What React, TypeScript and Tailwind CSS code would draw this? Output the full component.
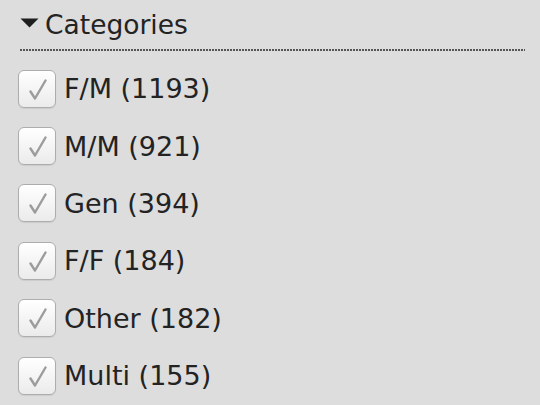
const categories = [
  { name: "F/M", count: 1193 },
  { name: "M/M", count: 921 },
  { name: "Gen", count: 394 },
  { name: "F/F", count: 184 },
  { name: "Other", count: 182 },
  { name: "Multi", count: 155 },
];

function CheckBox() {
  return (
    <div className="flex h-[38px] w-[38px] shrink-0 items-center justify-center rounded-[6px] border-[1.5px] border-[#adadad] bg-gradient-to-b from-[#ffffff] to-[#ebebeb] shadow-[0_1px_1px_rgba(0,0,0,0.08)]">
      <svg width="18" height="21" viewBox="0 0 18 21" className="ml-[1px] mt-[1px]">
        <path
          d="M1.5 12.5 L6 19.5 L16.5 1.5"
          fill="none"
          stroke="#9c9c9c"
          strokeWidth="2.4"
          strokeLinecap="round"
          strokeLinejoin="round"
        />
      </svg>
    </div>
  );
}

export default function App() {
  return (
    <div className="h-[405px] w-[540px] overflow-hidden bg-[#dddddd] font-['DejaVu_Sans',sans-serif] text-[#232323]">
      {/* header */}
      <div className="flex h-[49px] items-start pl-[20px] pt-[7px]">
        <svg width="19" height="10" viewBox="0 0 19 10" className="mt-[11px]">
          <path d="M0.5 0.5 L18.5 0.5 L9.5 9.5 Z" fill="#1e1e1e" />
        </svg>
        <span className="ml-[6px] text-[26.5px] leading-[36px]">Categories</span>
      </div>
      <div className="ml-[20px] h-[2px] w-[505px] bg-[repeating-linear-gradient(to_right,#555555_0px,#555555_2px,transparent_2px,transparent_3px)]" />

      {/* list */}
      <div className="mt-[9px] flex flex-col">
        {categories.map((c) => (
          <div key={c.name} className="flex h-[57.4px] items-center pl-[18px]">
            <CheckBox />
            <span className="ml-[8px] text-[27px] leading-none">
              {c.name} ({c.count})
            </span>
          </div>
        ))}
      </div>
    </div>
  );
}
